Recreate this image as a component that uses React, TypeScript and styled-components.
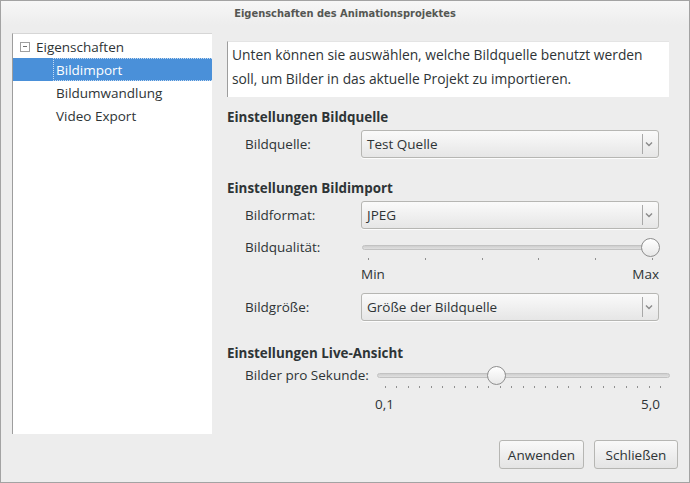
import React from "react";
import styled, { createGlobalStyle } from "styled-components";

const Global = createGlobalStyle`
  html, body { margin: 0; padding: 0; }
  body { background: #ededed; font-family: "Open Sans", "DejaVu Sans", sans-serif; color: #2e3436; }
  * { box-sizing: border-box; }
`;

const Window = styled.div`
  width: 690px;
  height: 483px;
  border: 1px solid #a3a3a3;
  background: #ededed;
  display: flex;
  flex-direction: column;
  font-size: 13px;
`;

const TitleBar = styled.div`
  height: 24px;
  flex: none;
  display: flex;
  align-items: center;
  justify-content: center;
  background: linear-gradient(#f7f7f7, #ededed);
  font-family: "Liberation Sans Narrow", "DejaVu Sans Condensed", sans-serif;
  font-weight: bold;
  font-size: 11px;
  color: #555753;
  padding-top: 1px;
`;

const Main = styled.div`
  display: flex;
  gap: 15px;
  padding: 8px 0 0 11px;
`;

const Tree = styled.div`
  width: 200px;
  height: 401px;
  background: #fff;
  border-left: 1px solid #9d9d9d;
  border-top: 1px solid #d6d6d6;
  padding-top: 1px;
`;

const TreeRow = styled.div<{ $level: number; $selected?: boolean }>`
  height: 23px;
  display: flex;
  align-items: center;
  padding-left: ${(p) => (p.$level === 0 ? 7 : 43)}px;
  background: ${(p) => (p.$selected ? "#4a90d9" : "transparent")};
  color: ${(p) => (p.$selected ? "#fff" : "#2e3436")};
  font-size: 13.5px;
`;

const Expander = styled.span`
  width: 10px;
  height: 10px;
  border: 1px solid #a0a0a0;
  position: relative;
  margin-right: 6px;
  flex: none;
  &::after {
    content: "";
    position: absolute;
    left: 2px;
    right: 2px;
    top: 3.5px;
    height: 1px;
    background: #707070;
  }
`;

const FocusText = styled.span`
  flex: 1;
  align-self: stretch;
  display: flex;
  align-items: center;
  margin-left: -3px;
  padding-left: 2px;
  border: 1px dotted #c6dbf2;
  border-right: none;
`;

const Right = styled.div`
  width: 442px;
  display: flex;
  flex-direction: column;
`;

const Description = styled.div`
  margin-top: 8px;
  height: 56px;
  background: #fff;
  border-left: 1px solid #9d9d9d;
  border-top: 1px solid #e4e4e4;
  padding: 1px 4px 0;
  line-height: 24px;
  font-size: 13.8px;
`;

const Heading = styled.div<{ $top: number }>`
  margin-top: ${(p) => p.$top}px;
  font-weight: bold;
  font-size: 13.4px;
  line-height: 18px;
  color: #2e3436;
`;

const Row = styled.div<{ $top: number; $h?: number }>`
  margin-top: ${(p) => p.$top}px;
  height: ${(p) => p.$h ?? 28}px;
  display: flex;
  align-items: center;
  padding-left: 18px;
`;

const Label = styled.span<{ $w?: number }>`
  width: ${(p) => (p.$w ? `${p.$w}px` : "auto")};
  flex: none;
  font-size: 13.5px;
`;

const Combo = styled.div`
  width: 298px;
  height: 28px;
  border: 1px solid #b6b6b3;
  border-radius: 3px;
  background: linear-gradient(#fafafa, #e6e6e6);
  display: flex;
  align-items: center;
  padding-left: 5px;
  font-size: 13.5px;
  box-shadow: 0 1px 0 rgba(255, 255, 255, 0.8);
`;

const ComboText = styled.span`
  flex: 1;
`;

const ComboSep = styled.span`
  width: 1px;
  height: 20px;
  background: #a8a8a8;
  margin-right: 2px;
`;

const Chevron = styled.svg`
  width: 8px;
  height: 6px;
  margin-right: 5px;
`;

const SliderWrap = styled.div<{ $ml: number; $grow?: boolean }>`
  position: relative;
  margin-left: ${(p) => p.$ml}px;
  flex: 1;
  height: 20px;
  margin-right: ${(p) => (p.$grow ? -1 : 0)}px;
`;

const Trough = styled.div`
  position: absolute;
  left: 0;
  right: 0;
  top: 8px;
  height: 5px;
  border-radius: 3px;
  background: linear-gradient(#cfcfcf, #e0e0e0);
  border: 1px solid #c2c2c2;
`;

const Knob = styled.div`
  position: absolute;
  top: 1px;
  width: 19px;
  height: 19px;
  margin-left: -9.5px;
  border-radius: 50%;
  border: 1px solid #8e8e8e;
  background: linear-gradient(#ffffff, #e8e8e8);
`;

const Ticks = styled.div<{ $ml: number; $w: number }>`
  position: relative;
  margin-left: ${(p) => p.$ml}px;
  width: ${(p) => p.$w}px;
  height: 3px;
`;

const Tick = styled.span`
  position: absolute;
  top: 0;
  width: 1px;
  height: 2px;
  background: #909090;
`;

const ScaleLabels = styled.div<{ $ml: number; $w: number; $top: number }>`
  margin-top: ${(p) => p.$top}px;
  margin-left: ${(p) => p.$ml}px;
  width: ${(p) => p.$w}px;
  display: flex;
  justify-content: space-between;
  font-size: 13.5px;
  line-height: 18px;
`;

const ButtonRow = styled.div`
  display: flex;
  justify-content: flex-end;
  gap: 10px;
  padding: 6px 11px 0 0;
`;

const Button = styled.button<{ $w: number }>`
  width: ${(p) => p.$w}px;
  height: 29px;
  border: 1px solid #b6b6b3;
  border-radius: 3px;
  background: linear-gradient(#f9f9f9, #e4e4e4);
  font-family: "Open Sans", "DejaVu Sans", sans-serif;
  font-size: 13.5px;
  color: #2e3436;
  padding: 0;
`;

const ChevronIcon = () => (
  <Chevron viewBox="0 0 8 6">
    <path d="M1 1.5 L4 4.5 L7 1.5" fill="none" stroke="#8a8a8a" strokeWidth="1.4" />
  </Chevron>
);

const ComboBox = ({ value }: { value: string }) => (
  <Combo>
    <ComboText>{value}</ComboText>
    <ComboSep />
    <ChevronIcon />
  </Combo>
);

const TickRow = ({ ml, w, count }: { ml: number; w: number; count: number }) => (
  <Ticks $ml={ml} $w={w}>
    {Array.from({ length: count }).map((_, i) => (
      <Tick key={i} style={{ left: `${(i * (w - 1)) / (count - 1)}px` }} />
    ))}
  </Ticks>
);

export default function App() {
  return (
    <>
      <Global />
      <Window>
        <TitleBar>Eigenschaften des Animationsprojektes</TitleBar>
        <Main>
          <Tree>
            <TreeRow $level={0}>
              <Expander />
              Eigenschaften
            </TreeRow>
            <TreeRow $level={1} $selected>
              <FocusText>Bildimport</FocusText>
            </TreeRow>
            <TreeRow $level={1}>Bildumwandlung</TreeRow>
            <TreeRow $level={1}>Video Export</TreeRow>
          </Tree>
          <Right>
            <Description>
              Unten können sie auswählen, welche Bildquelle benutzt werden
              <br />
              soll, um Bilder in das aktuelle Projekt zu importieren.
            </Description>
            <Heading $top={11}>Einstellungen Bildquelle</Heading>
            <Row $top={4}>
              <Label $w={116}>Bildquelle:</Label>
              <ComboBox value="Test Quelle" />
            </Row>
            <Heading $top={21}>Einstellungen Bildimport</Heading>
            <Row $top={4}>
              <Label $w={116}>Bildformat:</Label>
              <ComboBox value="JPEG" />
            </Row>
            <Row $top={7} $h={22}>
              <Label $w={117}>Bildqualität:</Label>
              <SliderWrap $ml={0}>
                <Trough style={{ right: 10 }} />
                <Knob style={{ left: 288 }} />
              </SliderWrap>
            </Row>
            <TickRow ml={141} w={285} count={6} />
            <ScaleLabels $ml={134} $w={298} $top={4}>
              <span>Min</span>
              <span>Max</span>
            </ScaleLabels>
            <Row $top={10}>
              <Label $w={116}>Bildgröße:</Label>
              <ComboBox value="Größe der Bildquelle" />
            </Row>
            <Heading $top={23}>Einstellungen Live-Ansicht</Heading>
            <Row $top={2} $h={22}>
              <Label>Bilder pro Sekunde:</Label>
              <SliderWrap $ml={8} $grow>
                <Trough />
                <Knob style={{ left: 120 }} />
              </SliderWrap>
            </Row>
            <TickRow ml={158} w={276} count={25} />
            <ScaleLabels $ml={148} $w={285} $top={6}>
              <span>0,1</span>
              <span>5,0</span>
            </ScaleLabels>
          </Right>
        </Main>
        <ButtonRow>
          <Button $w={85}>Anwenden</Button>
          <Button $w={84}>Schließen</Button>
        </ButtonRow>
      </Window>
    </>
  );
}
